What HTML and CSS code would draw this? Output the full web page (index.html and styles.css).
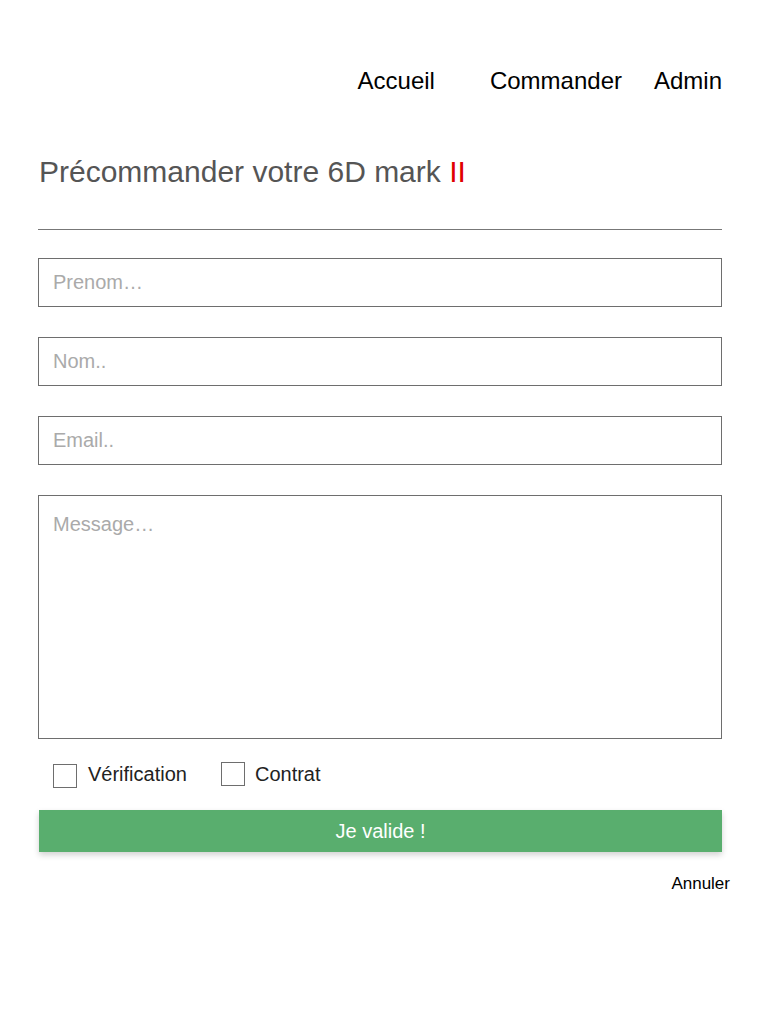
FILE: index.html
```html
<!DOCTYPE html>
<html lang="fr">
<head>
<meta charset="utf-8">
<title>Précommander</title>
<link rel="stylesheet" href="styles.css">
</head>
<body>
<div class="page">
  <nav class="nav">
    <a class="nav-item nav-accueil" href="#">Accueil</a>
    <a class="nav-item nav-commander" href="#">Commander</a>
    <a class="nav-item nav-admin" href="#">Admin</a>
  </nav>
  <h1 class="title">Précommander votre 6D mark <span class="accent">II</span></h1>
  <hr class="sep">
  <form class="form">
    <input class="field" type="text" placeholder="Prenom…">
    <input class="field" type="text" placeholder="Nom..">
    <input class="field" type="text" placeholder="Email..">
    <textarea class="field area" placeholder="Message…"></textarea>
    <div class="checks">
      <label class="check"><span class="box"></span><span class="check-label">Vérification</span></label>
      <label class="check check-2"><span class="box box-up"></span><span class="check-label">Contrat</span></label>
    </div>
    <button class="submit" type="button">Je valide !</button>
    <div class="cancel-row"><a class="cancel" href="#">Annuler</a></div>
  </form>
</div>
</body>
</html>
```

FILE: styles.css
```css
* { box-sizing: border-box; }
html, body { margin: 0; padding: 0; background: #fff; }
body { font-family: "Liberation Sans", Arial, sans-serif; color: #000; }
.page { width: 768px; padding: 0 46px 0 38px; }

.nav { display: flex; justify-content: flex-end; margin-top: 67px; height: 28px; }
.nav-item { font-size: 24px; line-height: 28px; color: #000; text-decoration: none; }
.nav-commander { margin-left: 55px; }
.nav-admin { margin-left: 32px; }

.title { margin: 59px 0 0 1px; font-size: 30px; line-height: 36px; font-weight: normal; color: #555; }
.accent { color: #e00000; }

.sep { margin: 39px 0 0; border: 0; border-top: 1px solid #777; height: 0; }

.form { display: flex; flex-direction: column; margin-top: 28px; }
.field { display: block; width: 100%; height: 49px; margin: 0 0 30px; padding: 0 14px; border: 1px solid #6e6e6e; border-radius: 0; font-family: "Liberation Sans", Arial, sans-serif; font-size: 20px; color: #333; background: #fff; outline: none; }
.field::placeholder { color: #aaa; }
.area { height: 244px; margin-bottom: 22px; padding: 16px 14px; resize: none; line-height: 24px; }

.checks { display: flex; align-items: center; padding-left: 15px; height: 30px; }
.check { display: flex; align-items: center; }
.check-2 { margin-left: 34px; }
.box { width: 24px; height: 24px; border: 1px solid #6e6e6e; background: #fff; }
.box-up { position: relative; top: -2px; }
.check-label { margin-left: 11px; font-size: 20px; color: #222; position: relative; top: -2px; }
.check-2 .check-label { margin-left: 10px; }

.submit { margin: 19px 0 0 1px; height: 42px; width: calc(100% - 1px); border: 0; background: #59ae6e; color: #fff; font-family: "Liberation Sans", Arial, sans-serif; font-size: 20px; box-shadow: 0 3px 6px rgba(0,0,0,0.18); cursor: pointer; }

.cancel-row { display: flex; justify-content: flex-end; margin: 22px -8px 0 0; }
.cancel { font-size: 17px; line-height: 20px; color: #000; text-decoration: none; }
```
